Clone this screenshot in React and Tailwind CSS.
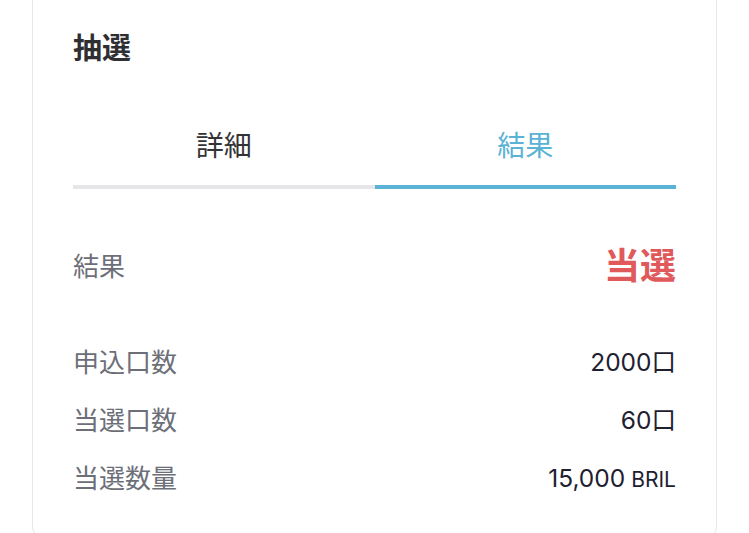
import React, { useState } from 'react';

const rows = [
  { label: '申込口数', value: '2000口' },
  { label: '当選口数', value: '60口' },
  { label: '当選数量', value: '15,000', unit: 'BRIL' },
];

const App = () => {
  const [tab, setTab] = useState('result');

  return (
    <div className="min-h-screen bg-white px-8 font-['Inter','Noto_Sans_CJK_JP',sans-serif]">
      <div className="rounded-b-[14px] border-x border-b border-[#e7e7eb] px-10 pt-[31px] pb-[32px]">
        <h2 className="text-[29px] font-bold leading-[36px] text-[#2f2f33]">抽選</h2>

        {/* タブ */}
        <div className="mt-[61px] flex">
          <button
            onClick={() => setTab('detail')}
            className={`flex-1 border-b-4 pb-[21px] text-[28px] leading-[36px] ${
              tab === 'detail' ? 'border-[#5ab3d5] text-[#5ab3d5]' : 'border-[#e6e6e9] text-[#333336]'
            }`}
          >
            詳細
          </button>
          <button
            onClick={() => setTab('result')}
            className={`flex-1 border-b-4 pb-[21px] text-[28px] leading-[36px] ${
              tab === 'result' ? 'border-[#5ab3d5] text-[#5ab3d5]' : 'border-[#e6e6e9] text-[#333336]'
            }`}
          >
            結果
          </button>
        </div>

        <div className="mt-[57px] flex h-[40px] items-center justify-between">
          <span className="text-[26px] text-[#6d6f78]">結果</span>
          <span className="text-[36px] font-bold text-[#e05a5c]">当選</span>
        </div>

        <div className="mt-[47px]">
          {rows.map((row) => (
            <div key={row.label} className="flex h-[58px] items-center justify-between">
              <span className="text-[26px] text-[#6d6f78]">{row.label}</span>
              <span className="text-[24.5px] text-[#1e2030]">
                {row.value}
                {row.unit && <span className="ml-[6px] text-[21px]">{row.unit}</span>}
              </span>
            </div>
          ))}
        </div>
      </div>
    </div>
  );
};

export default App;
